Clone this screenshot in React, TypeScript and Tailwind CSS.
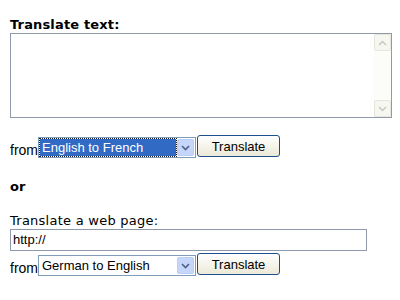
export default function App() {
  const verdana = { fontFamily: '"DejaVu Sans", Verdana, sans-serif' }
  const arial = { fontFamily: '"Liberation Sans", Arial, sans-serif' }

  const Chevron = () => (
    <svg width="9" height="6" viewBox="0 0 9 6">
      <path d="M1 1 L4.5 4.5 L8 1" fill="none" stroke="#4d6185" strokeWidth="1.6" />
    </svg>
  )

  const Select = ({ label, active }: { label: string; active?: boolean }) => (
    <div className="mt-[2px] flex h-[21px] w-[158px] items-stretch border border-[#7f9db9] bg-white p-[1px]">
      <div
        className={`flex flex-1 items-center px-[2px] text-[13px] leading-none ${
          active ? 'bg-[#316ac5] text-white outline-1 outline-dotted outline-[#1a1a1a]' : 'text-black'
        }`}
        style={arial}
      >
        {label}
      </div>
      <div className="ml-[1px] flex w-[17px] items-center justify-center rounded-[2px] border border-[#b9cdf6] bg-[#c6d6fb]">
        <Chevron />
      </div>
    </div>
  )

  const Button = () => (
    <button
      className="ml-[1px] h-[22px] w-[83px] rounded-[3px] border border-[#1c4f8c] bg-gradient-to-b from-white to-[#ece9d8] text-[13px] leading-none text-black"
      style={arial}
    >
      Translate
    </button>
  )

  return (
    <div className="h-[300px] w-[400px] bg-white pl-[10px] text-black">
      <div className="pt-[17px] text-[13px] font-bold leading-[16px] tracking-[0.15px]" style={verdana}>
        Translate text:
      </div>
      <div className="flex h-[85px] w-[382px] border border-[#8e9aa9] bg-white">
        <div className="flex-1" />
        <div className="flex w-[17px] flex-col justify-between bg-[#fcfcf9]">
          <div className="flex h-[17px] items-center justify-center rounded-[2px] border border-[#e6e6dd] bg-[#f7f7f2]">
            <svg width="9" height="6" viewBox="0 0 9 6">
              <path d="M1 5 L4.5 1.5 L8 5" fill="none" stroke="#c9c9c0" strokeWidth="1.5" />
            </svg>
          </div>
          <div className="flex h-[17px] items-center justify-center rounded-[2px] border border-[#e6e6dd] bg-[#f7f7f2]">
            <svg width="9" height="6" viewBox="0 0 9 6">
              <path d="M1 1 L4.5 4.5 L8 1" fill="none" stroke="#c9c9c0" strokeWidth="1.5" />
            </svg>
          </div>
        </div>
      </div>

      <div className="mt-[17px] flex items-start">
        <span className="mt-[8px] text-[14px] leading-none" style={arial}>from</span>
        <Select label="English to French" active />
        <Button />
      </div>

      <div className="mt-[21px] text-[13px] font-bold leading-[16px]" style={verdana}>
        or
      </div>

      <div className="mt-[18px] text-[13px] leading-[16px] tracking-[0.25px]" style={verdana}>
        Translate a web page:
      </div>
      <div
        className="flex h-[22px] w-[357px] items-center border border-[#8e9aa9] bg-white px-[2px] text-[13px]"
        style={arial}
      >
        http://
      </div>

      <div className="mt-[2px] flex items-start">
        <span className="mt-[8px] text-[14px] leading-none" style={arial}>from</span>
        <Select label="German to English" />
        <Button />
      </div>
    </div>
  )
}
